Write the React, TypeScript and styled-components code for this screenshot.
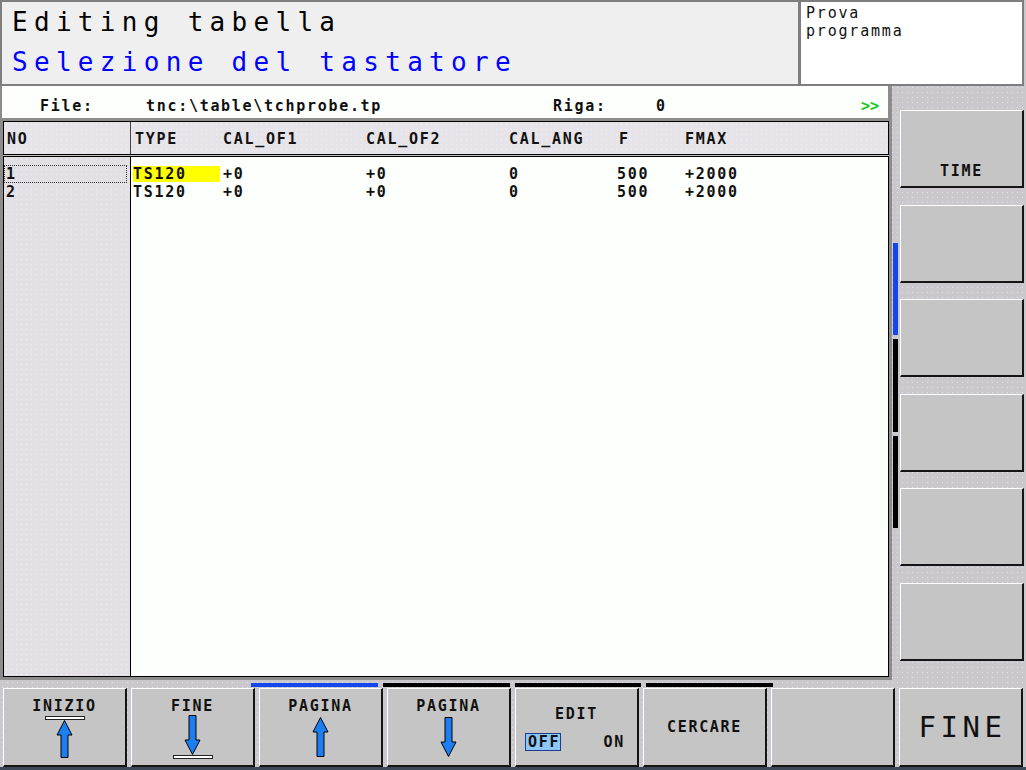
import React from 'react';
import styled, { createGlobalStyle } from 'styled-components';

const GlobalStyle = createGlobalStyle`
  html, body {
    margin: 0;
    padding: 0;
    width: 1026px;
    height: 770px;
    overflow: hidden;
    background: #cac8cd;
    font-family: "DejaVu Sans Mono", "Liberation Mono", monospace;
  }
`;

const dots = `
  background-image: radial-gradient(circle, rgba(255, 255, 255, 0.45) 0.6px, transparent 1px);
  background-size: 5px 5px;
`;

const Screen = styled.div`
  width: 1026px;
  height: 770px;
  display: grid;
  grid-template-columns: 892px 134px;
  grid-template-rows: 86px 594px 90px;
  background-color: #cac8cd;
  ${dots}
`;

/* ---------- header ---------- */

const Header = styled.header`
  grid-column: 1 / -1;
  display: flex;
`;

const TitlePanel = styled.div`
  box-sizing: border-box;
  flex: 0 0 798px;
  background: #efefef;
  border: 2px solid #7e7e7e;
  border-right: none;
  padding-left: 10px;
`;

const TitleLine = styled.div<{ $color: string }>`
  font-size: 26px;
  line-height: 40px;
  letter-spacing: 6.3px;
  color: ${({ $color }) => $color};
  white-space: pre;
`;

const ModePanel = styled.div`
  box-sizing: border-box;
  flex: 0 0 226px;
  background: #fff;
  border: 2px solid #7e7e7e;
  border-left-width: 3px;
  padding: 2px 0 0 5px;
  font-size: 15px;
  line-height: 18px;
  letter-spacing: 1.8px;
  color: #111;
`;

/* ---------- main table area ---------- */

const Main = styled.main`
  grid-column: 1;
  background: #8c8c8c;
  display: flex;
  flex-direction: column;
  padding-bottom: 3px;
`;

const FileRow = styled.div`
  box-sizing: border-box;
  margin-left: 2px;
  width: 886px;
  height: 32px;
  background: #fcfffc;
  display: grid;
  grid-template-columns: 106px 407px 103px 1fr auto;
  padding: 11px 9px 0 38px;
  font-size: 15px;
  font-weight: bold;
  line-height: 18px;
  letter-spacing: 1.7px;
  color: #111;
  white-space: pre;
`;

const More = styled.span`
  color: #22c822;
  letter-spacing: 0;
`;

const TableArea = styled.div`
  margin: 3px 0 0 3px;
  width: 886px;
  flex: 1;
  background: #c4c4c4;
  display: flex;
  flex-direction: column;
  gap: 1px;
  font-size: 15px;
  font-weight: bold;
  letter-spacing: 1.7px;
  color: #111;
`;

const COLS = '90px 143px 143px 108px 68px 1fr';

const HeadRow = styled.div`
  box-sizing: border-box;
  height: 34px;
  border: 1px solid #000;
  display: flex;
  background-color: #e6e4e8;
  ${dots}
`;

const HeadNo = styled.div`
  box-sizing: border-box;
  width: 127px;
  border-right: 1px solid #444;
  padding: 8px 0 0 3px;
  line-height: 18px;
`;

const HeadGrid = styled.div`
  flex: 1;
  display: grid;
  grid-template-columns: ${COLS};
  padding-top: 8px;
  line-height: 18px;
`;

const HeadCell = styled.div<{ $indent?: number }>`
  padding-left: ${({ $indent = 2 }) => $indent}px;
`;

const Body = styled.div`
  box-sizing: border-box;
  flex: 1;
  border: 1px solid #000;
  display: flex;
  background: #fcfffc;
`;

const NoColumn = styled.div`
  box-sizing: border-box;
  width: 127px;
  border-right: 1px solid #000;
  padding-top: 8px;
  background-color: #e2e0e4;
  ${dots}
`;

const NoCell = styled.div<{ $focus?: boolean }>`
  box-sizing: border-box;
  height: 18px;
  margin-right: 3px;
  line-height: 16px;
  padding-left: 1px;
  border: 1px ${({ $focus }) => ($focus ? 'dotted #333' : 'solid transparent')};
`;

const DataColumn = styled.div`
  flex: 1;
  padding-top: 8px;
`;

const DataRow = styled.div`
  display: grid;
  grid-template-columns: ${COLS};
  height: 18px;
  line-height: 18px;
`;

const DataCell = styled.div<{ $highlight?: boolean }>`
  white-space: pre;
  ${({ $highlight }) =>
    $highlight
      ? `background: #ffff00; margin: 1px 1px 1px 2px; line-height: 16px;`
      : `padding-left: 2px;`}
`;

/* ---------- right softkey column ---------- */

const Side = styled.aside`
  grid-column: 2;
  display: flex;
`;

const ScrollTrack = styled.div`
  width: 5px;
  margin-left: 1px;
  padding-top: 157px;
  display: flex;
  flex-direction: column;
  gap: 4px;
`;

const ScrollPart = styled.div<{ $color: string; $h: number }>`
  height: ${({ $h }) => $h}px;
  background: ${({ $color }) => $color};
`;

const SideKeys = styled.div`
  margin-left: 2px;
  padding-top: 24px;
  display: flex;
  flex-direction: column;
  gap: 16.6px;
`;

const Key = styled.div<{ $justify?: string }>`
  box-sizing: border-box;
  width: 124px;
  background-color: #c5c5c5;
  border-top: 1px solid #fff;
  border-left: 1px solid #fff;
  border-right: 2px solid #151515;
  border-bottom: 2px solid #151515;
  display: flex;
  flex-direction: column;
  align-items: center;
  justify-content: ${({ $justify = 'flex-start' }) => $justify};
  font-size: 15px;
  font-weight: bold;
  line-height: 18px;
  letter-spacing: 1.7px;
  color: #111;
`;

const SideKey = styled(Key)`
  height: 78px;
  padding-bottom: 6px;
`;

/* ---------- bottom softkey row ---------- */

const Bottom = styled.footer`
  grid-column: 1 / -1;
  display: flex;
  flex-direction: column;
  padding-top: 3px;
  border-bottom: 3px solid #3c4856;
  box-sizing: border-box;
`;

const Indicators = styled.div`
  height: 4px;
  display: flex;
  padding-left: 251px;
  gap: 5px;
  margin-bottom: 1px;
`;

const Indicator = styled.div<{ $color: string; $w: number }>`
  width: ${({ $w }) => $w}px;
  background: ${({ $color }) => $color};
`;

const KeyRow = styled.div`
  display: flex;
  gap: 4px;
  padding-left: 3px;
`;

const BottomKey = styled(Key)<{ $top?: number }>`
  height: 79px;
  padding-top: ${({ $top = 0 }) => $top}px;
`;

const Bar = styled.div<{ $gap: number }>`
  box-sizing: border-box;
  width: 40px;
  height: 4px;
  background: #fff;
  border: 1px solid #222;
  margin-top: ${({ $gap }) => $gap}px;
`;

const Toggle = styled.div`
  align-self: stretch;
  display: flex;
  justify-content: space-between;
  align-items: center;
  margin-top: 10px;
  padding: 0 11px 0 9px;
`;

const ToggleOption = styled.span<{ $active?: boolean }>`
  box-sizing: border-box;
  height: 18px;
  line-height: 16px;
  padding: 0 0 0 2px;
  border: 1px solid ${({ $active }) => ($active ? '#1e3c8c' : 'transparent')};
  background: ${({ $active }) => ($active ? '#8ec6f6' : 'transparent')};
`;

const BigLabel = styled.span`
  font-size: 29px;
  font-weight: normal;
  letter-spacing: 4.6px;
  margin-left: 4px;
`;

const Arrow: React.FC<{ dir: 'up' | 'down'; length: number; top?: number }> = ({
  dir,
  length,
  top = 0,
}) => {
  const L = length;
  const up = `8.5,0.5 16,15 12,15 12,${L - 0.5} 5,${L - 0.5} 5,15 1,15`;
  const down = `8.5,${L - 0.5} 16,${L - 15} 12,${L - 15} 12,0.5 5,0.5 5,${L - 15} 1,${L - 15}`;
  return (
    <svg width={17} height={L} style={{ marginTop: top, display: 'block' }}>
      <polygon points={dir === 'up' ? up : down} fill="#1b7ff2" stroke="#000" strokeWidth={1} />
    </svg>
  );
};

const ROWS = [
  { no: '1', type: 'TS120', of1: '+0', of2: '+0', ang: '0', f: '500', fmax: '+2000' },
  { no: '2', type: 'TS120', of1: '+0', of2: '+0', ang: '0', f: '500', fmax: '+2000' },
];

const App: React.FC = () => {
  return (
    <>
      <GlobalStyle />
      <Screen>
        <Header>
          <TitlePanel>
            <TitleLine $color="#000">Editing tabella</TitleLine>
            <TitleLine $color="#0000ff">Selezione del tastatore</TitleLine>
          </TitlePanel>
          <ModePanel>
            <div>Prova</div>
            <div>programma</div>
          </ModePanel>
        </Header>

        <Main>
          <FileRow>
            <span>File:</span>
            <span>tnc:\table\tchprobe.tp</span>
            <span>Riga:</span>
            <span>0</span>
            <More>&gt;&gt;</More>
          </FileRow>
          <TableArea>
            <HeadRow>
              <HeadNo>NO</HeadNo>
              <HeadGrid>
                <HeadCell $indent={4}>TYPE</HeadCell>
                <HeadCell>CAL_OF1</HeadCell>
                <HeadCell>CAL_OF2</HeadCell>
                <HeadCell>CAL_ANG</HeadCell>
                <HeadCell $indent={4}>F</HeadCell>
                <HeadCell>FMAX</HeadCell>
              </HeadGrid>
            </HeadRow>
            <Body>
              <NoColumn>
                {ROWS.map((r, i) => (
                  <NoCell key={r.no} $focus={i === 0}>
                    {r.no}
                  </NoCell>
                ))}
              </NoColumn>
              <DataColumn>
                {ROWS.map((r, i) => (
                  <DataRow key={r.no}>
                    <DataCell $highlight={i === 0}>{r.type}</DataCell>
                    <DataCell>{r.of1}</DataCell>
                    <DataCell>{r.of2}</DataCell>
                    <DataCell>{r.ang}</DataCell>
                    <DataCell>{r.f}</DataCell>
                    <DataCell>{r.fmax}</DataCell>
                  </DataRow>
                ))}
              </DataColumn>
            </Body>
          </TableArea>
        </Main>

        <Side>
          <ScrollTrack>
            <ScrollPart $color="#1446f0" $h={92} />
            <ScrollPart $color="#000" $h={93} />
            <ScrollPart $color="#000" $h={92} />
          </ScrollTrack>
          <SideKeys>
            <SideKey $justify="flex-end">TIME</SideKey>
            <SideKey />
            <SideKey />
            <SideKey />
            <SideKey />
            <SideKey />
          </SideKeys>
        </Side>

        <Bottom>
          <Indicators>
            <Indicator $color="#1446f0" $w={127} />
            <Indicator $color="#000" $w={127} />
            <Indicator $color="#000" $w={126} />
            <Indicator $color="#000" $w={127} />
          </Indicators>
          <KeyRow>
            <BottomKey $top={8}>
              INIZIO
              <Bar $gap={1} />
              <Arrow dir="up" length={38} />
            </BottomKey>
            <BottomKey $top={8}>
              FINE
              <Arrow dir="down" length={40} />
              <Bar $gap={0} />
            </BottomKey>
            <BottomKey $top={8}>
              PAGINA
              <Arrow dir="up" length={40} top={2} />
            </BottomKey>
            <BottomKey $top={8}>
              PAGINA
              <Arrow dir="down" length={40} top={2} />
            </BottomKey>
            <BottomKey $top={16}>
              EDIT
              <Toggle>
                <ToggleOption $active>OFF</ToggleOption>
                <ToggleOption>ON</ToggleOption>
              </Toggle>
            </BottomKey>
            <BottomKey $justify="center">CERCARE</BottomKey>
            <BottomKey />
            <BottomKey $justify="center">
              <BigLabel>FINE</BigLabel>
            </BottomKey>
          </KeyRow>
        </Bottom>
      </Screen>
    </>
  );
};

export default App;
